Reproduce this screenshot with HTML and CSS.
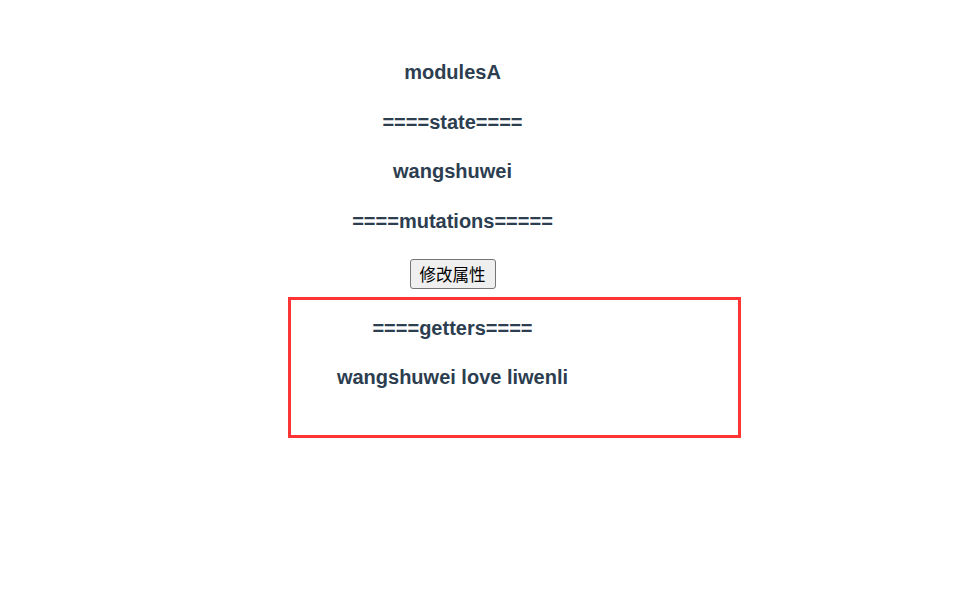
FILE: index.html
```html
<!DOCTYPE html>
<html lang="zh-CN">
<head>
<meta charset="utf-8">
<title>modulesA</title>
<link rel="stylesheet" href="styles.css">
</head>
<body>
<div class="app">
  <h3 class="line">modulesA</h3>
  <h3 class="line">====state====</h3>
  <h3 class="line">wangshuwei</h3>
  <h3 class="line">====mutations=====</h3>
  <button class="btn" type="button">修改属性</button>
  <h3 class="line">====getters====</h3>
  <h3 class="line">wangshuwei love liwenli</h3>
</div>
<div class="highlight"></div>
</body>
</html>
```
FILE: styles.css
```css
html, body {
  margin: 0;
  padding: 0;
  background: #ffffff;
}

body {
  font-family: "Liberation Sans", Arial, sans-serif;
  color: #2c3e50;
}

.app {
  width: 905px;
  padding-top: 61px;
  display: flex;
  flex-direction: column;
  align-items: center;
  gap: 26.5px;
}

.line {
  margin: 0;
  font-size: 20px;
  line-height: 23px;
  font-weight: bold;
  white-space: nowrap;
}

.btn {
  font-family: "Noto Sans CJK SC", "Microsoft YaHei", sans-serif;
  font-size: 16.5px;
  line-height: 22px;
  height: 30px;
  padding: 3px 9px;
  margin: 0 0 1px;
  color: #000000;
  background: #efefef;
  border: 1px solid #767676;
  border-radius: 3px;
}

.highlight {
  position: absolute;
  left: 288px;
  top: 297px;
  width: 453px;
  height: 141px;
  box-sizing: border-box;
  border: 3px solid #ff3535;
}
```
